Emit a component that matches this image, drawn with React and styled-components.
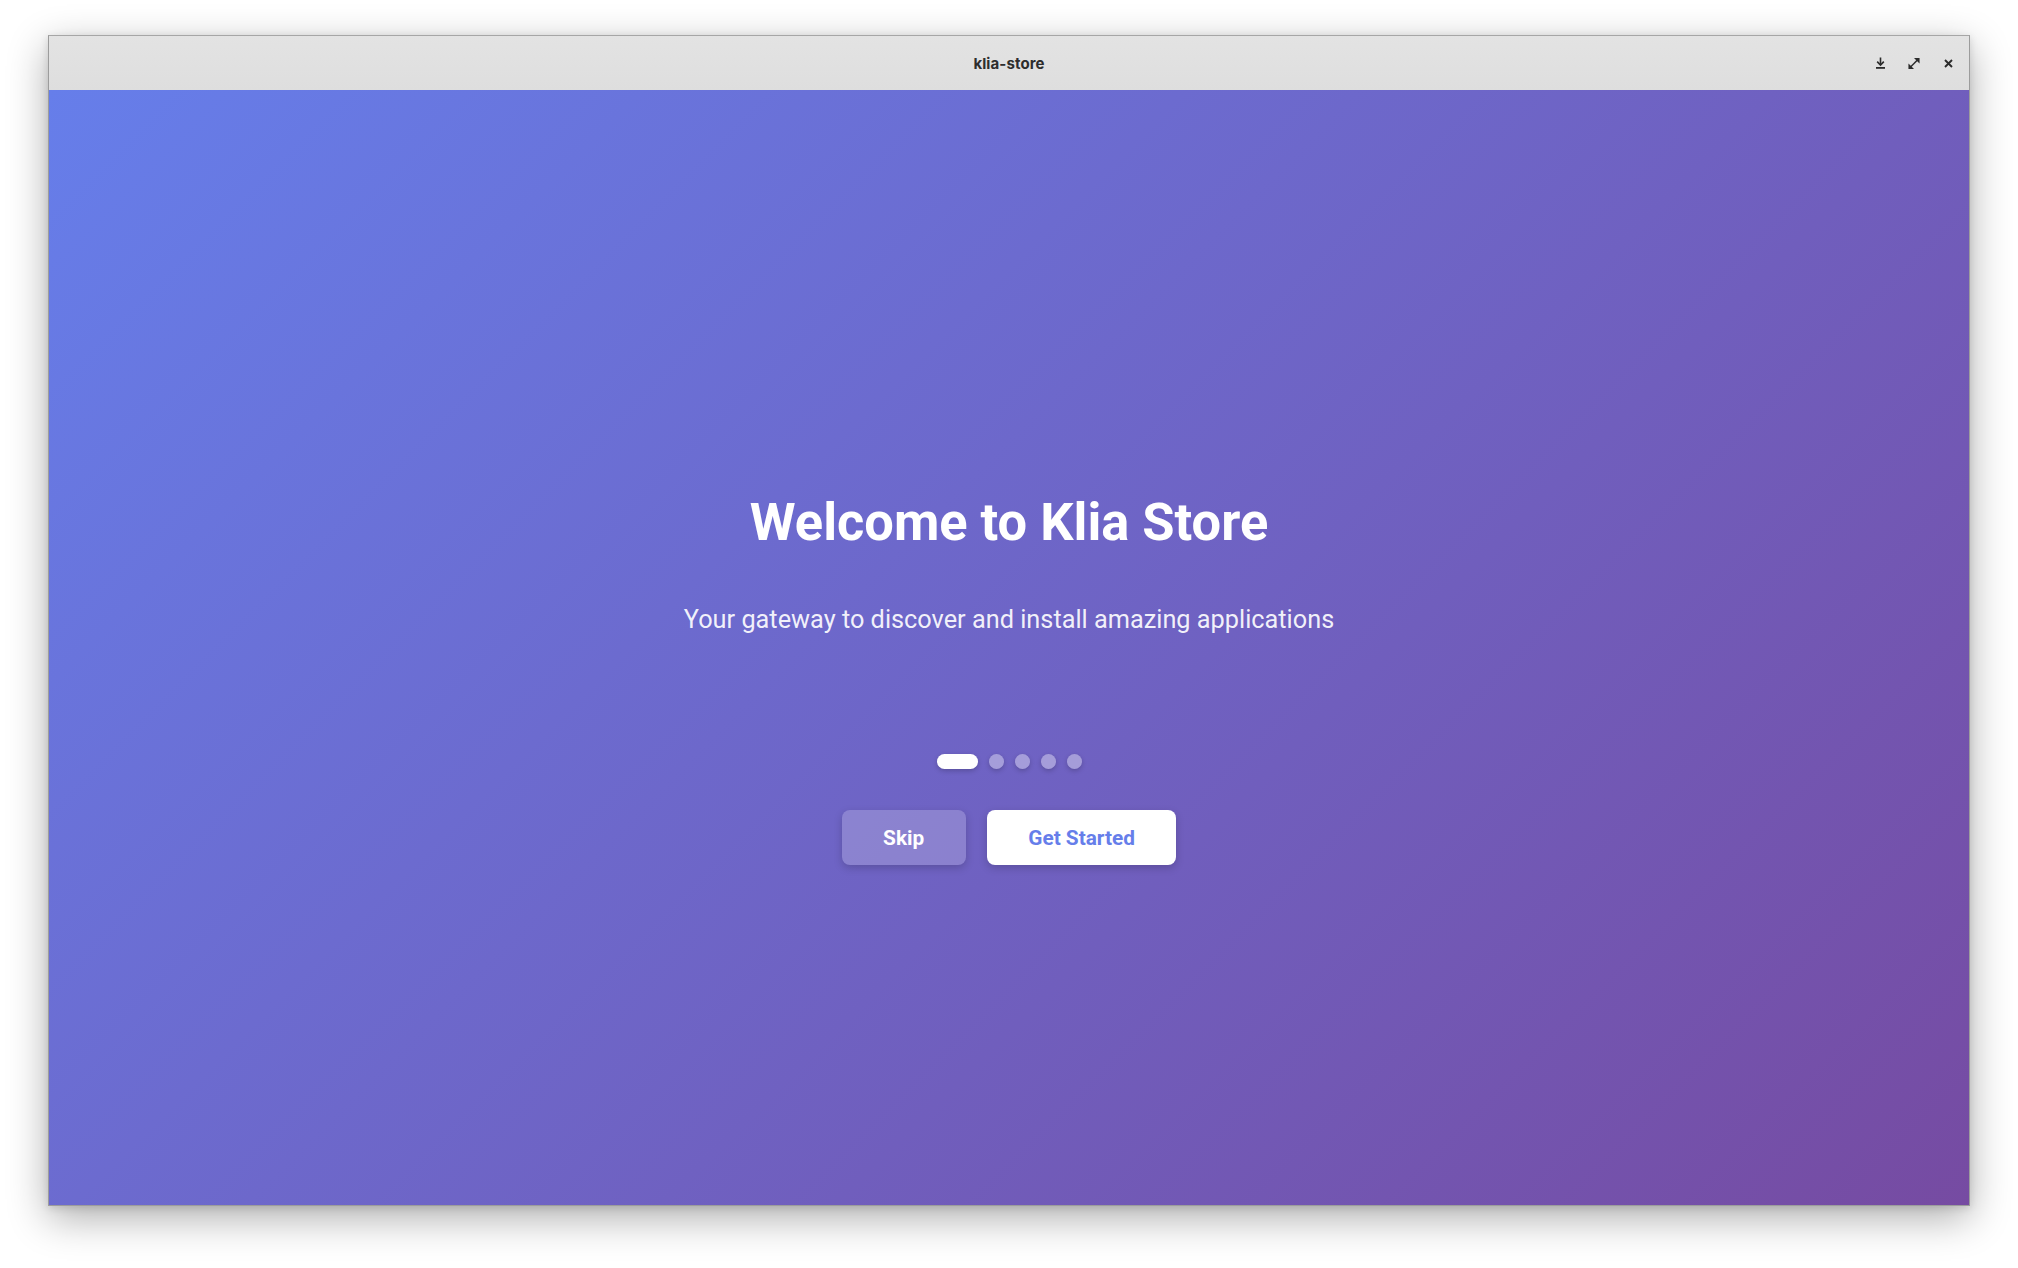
import React, { useState } from "react";
import styled, { createGlobalStyle } from "styled-components";

const Global = createGlobalStyle`
  html, body { margin: 0; padding: 0; background: #ffffff; }
  body { font-family: Roboto, "Noto Sans", sans-serif; }
  * { box-sizing: border-box; }
`;

const Desktop = styled.div`
  width: 2018px;
  height: 1268px;
  padding: 35px 48px;
  background: #ffffff;
`;

const Window = styled.div`
  width: 1922px;
  height: 1171px;
  border: 1px solid #9c9c9c;
  border-top-color: #a6a6a6;
  display: flex;
  flex-direction: column;
  box-shadow: 0 12px 38px rgba(0, 0, 0, 0.32), 0 2px 8px rgba(0, 0, 0, 0.12);
  overflow: hidden;
`;

const TitleBar = styled.div`
  height: 54px;
  flex: none;
  position: relative;
  display: flex;
  align-items: center;
  justify-content: center;
  background: linear-gradient(#e3e3e3, #dedede);
`;

const Title = styled.div`
  font-family: Inter, "Noto Sans", sans-serif;
  font-weight: 700;
  font-size: 15px;
  color: #2d2d2d;
  letter-spacing: 0.1px;
`;

const Controls = styled.div`
  position: absolute;
  right: 15px;
  top: 0;
  height: 100%;
  display: flex;
  align-items: center;
  gap: 22px;
`;

const Ctrl = styled.span`
  display: flex;
  align-items: center;
  justify-content: center;
  width: 12px;
  height: 14px;
  color: #2b2b2b;
`;

const Content = styled.main`
  flex: 1;
  display: flex;
  flex-direction: column;
  align-items: center;
  justify-content: center;
  padding-top: 62px;
  background: linear-gradient(135deg, #667eea 0%, #764ba2 100%);
  color: #ffffff;
`;

const Heading = styled.h1`
  margin: 0;
  font-family: Roboto, sans-serif;
  font-weight: 700;
  font-size: 52.4px;
  line-height: 61px;
  color: #ffffff;
`;

const Subtitle = styled.p`
  margin: 52px 0 0;
  font-family: Roboto, sans-serif;
  font-weight: 400;
  font-size: 25.3px;
  line-height: 30px;
  color: rgba(255, 255, 255, 0.92);
`;

const Dots = styled.div`
  margin-top: 119px;
  display: flex;
  gap: 11px;
`;

const Dot = styled.button`
  border: none;
  padding: 0;
  height: 15px;
  width: ${(p) => (p.$active ? "41px" : "15px")};
  border-radius: 8px;
  background: ${(p) => (p.$active ? "#ffffff" : "rgba(255,255,255,0.38)")};
  box-shadow: 0 2px 5px rgba(0, 0, 0, 0.2);
  cursor: pointer;
`;

const Buttons = styled.div`
  margin-top: 41px;
  display: flex;
  gap: 21px;
`;

const Button = styled.button`
  height: 55px;
  padding: 0 41.5px;
  border: none;
  border-radius: 8px;
  font-family: Roboto, sans-serif;
  font-weight: 700;
  font-size: 20.8px;
  cursor: pointer;
  background: ${(p) => (p.$primary ? "#ffffff" : "rgba(255,255,255,0.2)")};
  color: ${(p) => (p.$primary ? "#667eea" : "#ffffff")};
  box-shadow: 0 3px 8px rgba(0, 0, 0, 0.18);
`;

const MinIcon = () => (
  <svg width="9" height="12" viewBox="0 0 9 12">
    <path d="M4.5 0.5V7.5" stroke="currentColor" strokeWidth="1.6" />
    <path d="M1.2 4.6L4.5 8L7.8 4.6" stroke="currentColor" strokeWidth="1.6" fill="none" />
    <rect x="0" y="10" width="9" height="1.8" fill="currentColor" />
  </svg>
);

const MaxIcon = () => (
  <svg width="13" height="13" viewBox="0 0 13 13">
    <path d="M3 10L10 3" stroke="currentColor" strokeWidth="1.6" />
    <path d="M6.5 0.5H12.5V6.5Z" fill="currentColor" />
    <path d="M0.5 6.5V12.5H6.5Z" fill="currentColor" />
  </svg>
);

const CloseIcon = () => (
  <svg width="9" height="9" viewBox="0 0 9 9">
    <path d="M1 1L8 8M8 1L1 8" stroke="currentColor" strokeWidth="1.9" />
  </svg>
);

export default function App() {
  const [step, setStep] = useState(0);
  return (
    <>
      <Global />
      <Desktop>
        <Window>
          <TitleBar>
            <Title>klia-store</Title>
            <Controls>
              <Ctrl><MinIcon /></Ctrl>
              <Ctrl><MaxIcon /></Ctrl>
              <Ctrl><CloseIcon /></Ctrl>
            </Controls>
          </TitleBar>
          <Content>
            <Heading>Welcome to Klia Store</Heading>
            <Subtitle>Your gateway to discover and install amazing applications</Subtitle>
            <Dots>
              {[0, 1, 2, 3, 4].map((i) => (
                <Dot key={i} $active={i === step} onClick={() => setStep(i)} aria-label={`Step ${i + 1}`} />
              ))}
            </Dots>
            <Buttons>
              <Button>Skip</Button>
              <Button $primary>Get Started</Button>
            </Buttons>
          </Content>
        </Window>
      </Desktop>
    </>
  );
}
